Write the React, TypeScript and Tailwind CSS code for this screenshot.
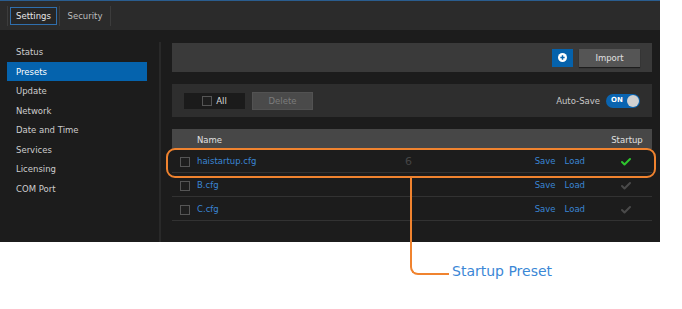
import { Check } from 'lucide-react'

const menu = ['Status', 'Presets', 'Update', 'Network', 'Date and Time', 'Services', 'Licensing', 'COM Port']

const presets = [
  { name: 'haistartup.cfg', startup: true },
  { name: 'B.cfg', startup: false },
  { name: 'C.cfg', startup: false },
]

function Box() {
  return <span className="block h-[10px] w-[10px] border border-[#555] bg-[#1e1e1e]" />
}

export default function App() {
  return (
    <div className="relative h-[309px] w-[682px] overflow-hidden bg-white font-['DejaVu_Sans',sans-serif] text-[8.5px]">
      <div className="flex h-[242px] w-[660px] flex-col bg-[#1c1c1c]">
        {/* Top tabs */}
        <div className="flex h-[30px] items-center border-t border-[#2a5d8f] bg-[#2b2b2b] pl-[7px]">
          <span className="h-[20px] w-px bg-[#3c3c3c]" />
          <div className="ml-[2px] flex h-[18px] w-[47px] items-center justify-center border border-[#2f6fae] bg-[#262626] pt-px text-[#e6e6e6]">
            Settings
          </div>
          <span className="ml-[2px] h-[20px] w-px bg-[#3c3c3c]" />
          <div className="flex w-[50px] items-center justify-center pt-px text-[#bdbdbd]">Security</div>
          <span className="h-[20px] w-px bg-[#3c3c3c]" />
        </div>

        <div className="flex flex-1">
          {/* Sidebar */}
          <div className="w-[159px] pt-[12px]">
            {menu.map((m) => (
              <div
                key={m}
                className={`ml-[7px] mr-[12px] flex h-[19.5px] items-center pl-[9px] pt-[2px] ${
                  m === 'Presets' ? 'bg-[#0563ad] text-white' : 'text-[#cdcdcd]'
                }`}
              >
                {m}
              </div>
            ))}
          </div>
          <div className="mt-[12px] w-[2px] bg-[#292929]" />

          {/* Content */}
          <div className="flex flex-1 flex-col pl-[11px] pr-[8px] pt-[13px]">
            <div className="flex h-[29px] items-center justify-end gap-[6px] bg-[#3a3a3a] pr-[12px]">
              <button className="flex h-[18px] w-[21px] items-center justify-center bg-[#0562ac]">
                <svg width="9" height="9" viewBox="0 0 10 10">
                  <circle cx="5" cy="5" r="5" fill="#fff" />
                  <path d="M5 2.6v4.8M2.6 5h4.8" stroke="#0562ac" strokeWidth="1.6" />
                </svg>
              </button>
              <button className="h-[18px] w-[61px] bg-[#555] pt-px text-[#e0e0e0] shadow-[0_1px_1px_rgba(0,0,0,0.5)]">Import</button>
            </div>

            <div className="mt-[12px] flex h-[33px] items-center bg-[#2e2e2e] px-[12px]">
              <div className="flex h-[16px] w-[61px] items-center justify-center gap-[4px] bg-[#1b1b1b] text-[#ddd]">
                <Box />
                <span className="pt-px">All</span>
              </div>
              <button className="ml-[7px] h-[18px] w-[61px] border border-[#525252] bg-[#4a4a4a] pt-px text-[#7c7c7c]">Delete</button>
              <span className="ml-auto pt-px text-[#c8c8c8]">Auto-Save</span>
              <div className="ml-[6px] flex h-[14px] w-[34px] items-center justify-between rounded-full bg-[#0a64b0] pl-[5px] pr-[1px]">
                <span className="text-[7px] font-bold text-white">ON</span>
                <span className="h-[12px] w-[12px] rounded-full bg-[#d0d0d0]" />
              </div>
            </div>

            <div className="mt-[12px] flex h-[20px] items-center bg-[#474747] pl-[25px] pr-[5px] pt-[2px] text-[#e0e0e0]">
              <span className="flex-1">Name</span>
              <span className="w-[40px] text-center">Startup</span>
            </div>
            {presets.map((p) => (
              <div key={p.name} className="flex h-[24px] items-center border-b border-[#323232] pl-[8px] pr-[5px] pt-[2px]">
                <Box />
                <span className="ml-[7px] flex-1 text-[#3a85d4]">{p.name}</span>
                <span className="text-[#3a85d4]">Save</span>
                <span className="ml-[9px] text-[#3a85d4]">Load</span>
                <span className="ml-[22px] flex w-[40px] justify-center pr-[3px]">
                  <Check size={12} strokeWidth={4} className={p.startup ? 'text-[#2ec52e]' : 'text-[#4a4a4a]'} />
                </span>
              </div>
            ))}
          </div>
        </div>
      </div>

      {/* Callout */}
      <span className="absolute left-[405px] top-[154px] text-[11px] text-[#454545]">6</span>
      <div className="absolute left-[166px] top-[148px] h-[30px] w-[490px] rounded-[9px] border-[2.5px] border-[#f0832f]" />
      <div className="absolute left-[409.5px] top-[177px] h-[98px] w-[39px] rounded-bl-[8px] border-b-[2.5px] border-l-[2.5px] border-[#f0832f]" />
      <span className="absolute left-[452px] top-[263px] text-[14px] leading-[17px] text-[#3b87d6]">Startup Preset</span>
    </div>
  )
}
